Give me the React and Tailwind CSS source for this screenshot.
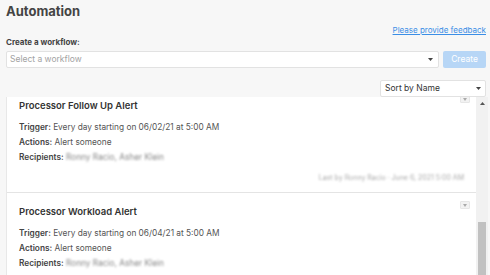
function Caret({ className = "" }) {
  return (
    <svg width="5" height="3" viewBox="0 0 5 3" className={className}>
      <path d="M0 0h5L2.5 3z" fill="#444" />
    </svg>
  );
}

function Card({ title, trigger, footer }) {
  return (
    <div className="relative px-[12px] pt-[13px] pb-[8px] border-b border-[#e4e4e4]">
      <div className="absolute right-[6px] top-[8px] w-[10px] h-[8px] bg-[#f2f2f2] border border-[#e6e6e6] rounded-[1px] flex items-center justify-center">
        <svg width="4" height="3" viewBox="0 0 4 3">
          <path d="M0 0h4L2 3z" fill="#aaa" />
        </svg>
      </div>
      <div className="text-[9.5px] leading-[12px] font-semibold text-[#333]">{title}</div>
      <div className="mt-[8px] text-[8.3px] leading-[15px] text-[#555]">
        <div>
          <span className="font-semibold text-[#444]">Trigger:</span> {trigger}
        </div>
        <div>
          <span className="font-semibold text-[#444]">Actions:</span> Alert someone
        </div>
        <div>
          <span className="font-semibold text-[#444]">Recipients:</span>{" "}
          <span className="blur-[1.2px] text-[#888]">Ronny Racio, Asher Klein</span>
        </div>
      </div>
      {footer ? (
        <div className="mt-[7px] text-right text-[7px] leading-[12px] text-[#aaa] blur-[1.2px]">
          {footer}
        </div>
      ) : (
        <div className="h-[19px]" />
      )}
    </div>
  );
}

export default function App() {
  return (
    <div
      className="w-[490px] h-[275px] overflow-hidden bg-[#f7f7f7] pl-[6px] pr-[2px] flex flex-col"
      style={{ fontFamily: "Inter, 'Noto Sans', sans-serif" }}
    >
      <div className="pr-[2px]">
        <h1 className="mt-[2px] text-[13px] leading-[18px] font-bold text-[#444]">Automation</h1>
        <div className="mt-[4px] flex justify-end">
          <a className="text-[8px] leading-[12px] text-[#3b8ee6] underline">Please provide feedback</a>
        </div>
        <div className="mt-[1px] text-[8px] leading-[11px] font-bold text-[#444]">Create a workflow:</div>
        <div className="mt-[3px] flex gap-[4px]">
          <div className="flex-1 h-[17px] bg-white border border-[#e2e2e2] rounded-[2px] flex items-center justify-between px-[3px]">
            <span className="text-[8.5px] text-[#a3a3a3]">Select a workflow</span>
            <Caret className="mr-[2px]" />
          </div>
          <button className="w-[43px] h-[17px] bg-[#b7d6f6] rounded-[2px] text-[8.5px] text-white">Create</button>
        </div>
        <div className="mt-[12px] flex justify-end">
          <div className="w-[106px] h-[17px] bg-white border border-[#e2e2e2] rounded-[2px] flex items-center justify-between px-[4px]">
            <span className="text-[8.5px] text-[#333]">Sort by Name</span>
            <Caret />
          </div>
        </div>
      </div>
      <div className="flex-1 flex min-h-0 overflow-hidden">
        <div className="flex-1 bg-white border-l border-[#e8e8e8] overflow-hidden">
          <div className="-mt-[10px]">
            <Card
              title="Processor Follow Up Alert"
              trigger="Every day starting on 06/02/21 at 5:00 AM"
              footer="Last by Ronny Racio · June 6, 2021 5:00 AM"
            />
            <Card
              title="Processor Workload Alert"
              trigger="Every day starting on 06/04/21 at 5:00 AM"
            />
          </div>
        </div>
        <div className="relative w-[12px] bg-[#f1f1f1]">
          <svg width="5" height="3" viewBox="0 0 5 3" className="absolute left-[4px] top-[5px]">
            <path d="M0 3h5L2.5 0z" fill="#555" />
          </svg>
          <div className="absolute left-[2px] right-[2px] top-[125px] bottom-0 bg-[#c1c1c1]" />
        </div>
      </div>
    </div>
  );
}
